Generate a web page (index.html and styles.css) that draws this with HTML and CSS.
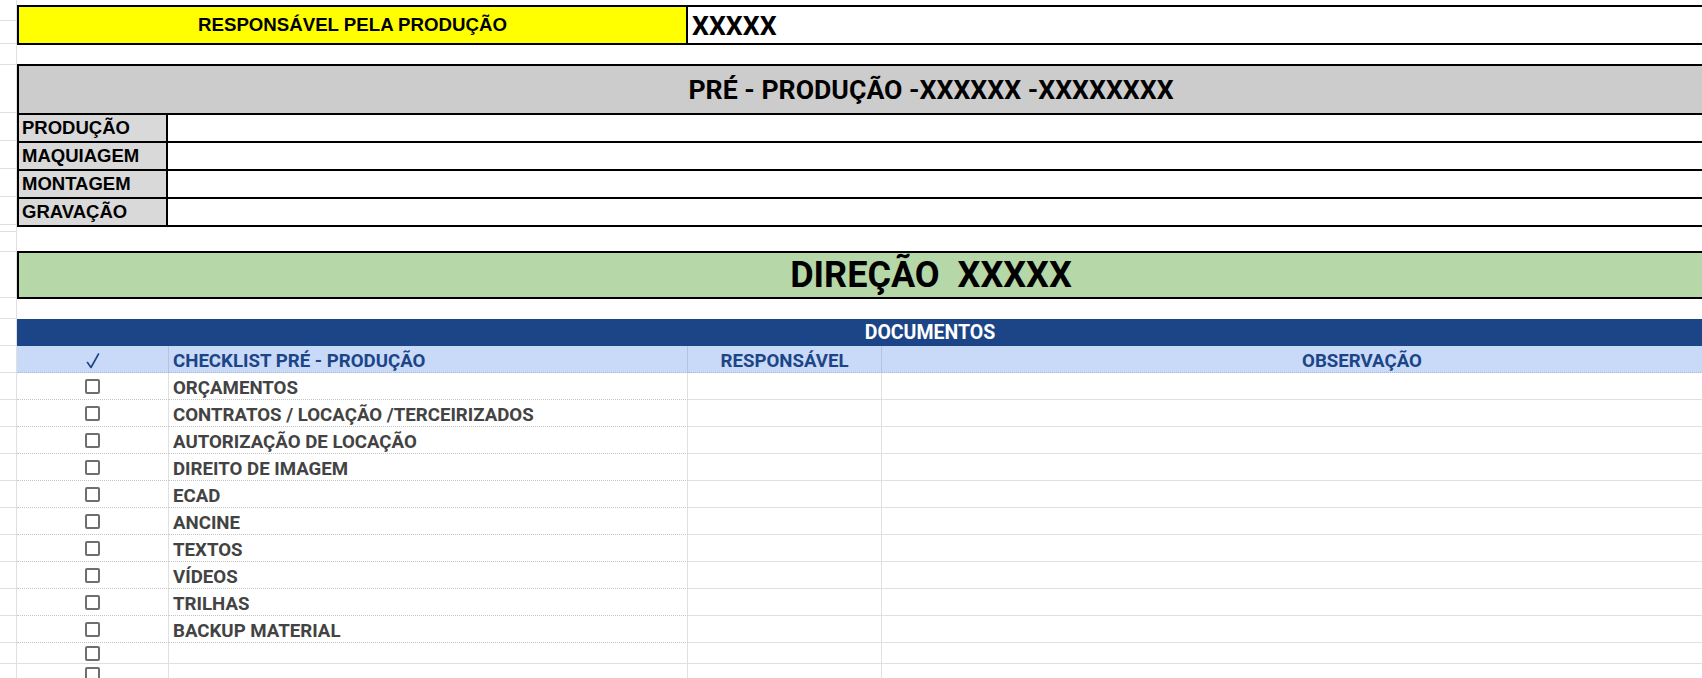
FILE: index.html
```html
<!DOCTYPE html>
<html lang="pt-BR">
<head>
<meta charset="utf-8">
<title>Checklist Pré-Produção</title>
<link rel="stylesheet" href="styles.css">
</head>
<body>
<div class="sheet">
  <div class="gutter">
    <div class="g21"></div><div class="g23"></div><div class="g21"></div><div class="g48"></div>
    <div class="g28"></div><div class="g28"></div><div class="g28"></div><div class="g28"></div>
    <div class="g7"></div><div class="g20"></div><div class="g46"></div><div class="g21"></div>
    <div class="g27"></div><div class="g27"></div>
    <div class="g27"></div><div class="g27"></div><div class="g27"></div><div class="g27"></div><div class="g27"></div>
    <div class="g27"></div><div class="g27"></div><div class="g27"></div><div class="g27"></div><div class="g27"></div>
    <div class="g21"></div><div class="g21"></div>
  </div>
  <div class="main">
    <div class="resp">
      <div class="resp-label">RESPONSÁVEL PELA PRODUÇÃO</div>
      <div class="resp-value">XXXXX</div>
    </div>

    <div class="pre">
      <div class="pre-title">PRÉ - PRODUÇÃO -XXXXXX -XXXXXXXX</div>
      <div class="pre-row"><div class="pre-label">PRODUÇÃO</div><div class="pre-value"></div></div>
      <div class="pre-row"><div class="pre-label">MAQUIAGEM</div><div class="pre-value"></div></div>
      <div class="pre-row"><div class="pre-label">MONTAGEM</div><div class="pre-value"></div></div>
      <div class="pre-row"><div class="pre-label">GRAVAÇÃO</div><div class="pre-value"></div></div>
    </div>

    <div class="direcao">DIREÇÃO  XXXXX</div>

    <div class="docs">
      <div class="docs-title">DOCUMENTOS</div>
      <div class="trow thead">
        <div class="c-check"><svg class="tick" width="14" height="16" viewBox="0 0 14 16"><polyline points="1.5,9.5 5,14.5 12.5,1" fill="none" stroke="#1c4587" stroke-width="1.6" stroke-linecap="round" stroke-linejoin="round"/></svg></div>
        <div class="c-item">CHECKLIST PRÉ - PRODUÇÃO</div>
        <div class="c-resp">RESPONSÁVEL</div>
        <div class="c-obs">OBSERVAÇÃO</div>
      </div>
      <div class="trow"><div class="c-check"><span class="box"></span></div><div class="c-item">ORÇAMENTOS</div><div class="c-resp"></div><div class="c-obs"></div></div>
      <div class="trow"><div class="c-check"><span class="box"></span></div><div class="c-item">CONTRATOS / LOCAÇÃO /TERCEIRIZADOS</div><div class="c-resp"></div><div class="c-obs"></div></div>
      <div class="trow"><div class="c-check"><span class="box"></span></div><div class="c-item">AUTORIZAÇÃO DE LOCAÇÃO</div><div class="c-resp"></div><div class="c-obs"></div></div>
      <div class="trow"><div class="c-check"><span class="box"></span></div><div class="c-item">DIREITO DE IMAGEM</div><div class="c-resp"></div><div class="c-obs"></div></div>
      <div class="trow"><div class="c-check"><span class="box"></span></div><div class="c-item">ECAD</div><div class="c-resp"></div><div class="c-obs"></div></div>
      <div class="trow"><div class="c-check"><span class="box"></span></div><div class="c-item">ANCINE</div><div class="c-resp"></div><div class="c-obs"></div></div>
      <div class="trow"><div class="c-check"><span class="box"></span></div><div class="c-item">TEXTOS</div><div class="c-resp"></div><div class="c-obs"></div></div>
      <div class="trow"><div class="c-check"><span class="box"></span></div><div class="c-item">VÍDEOS</div><div class="c-resp"></div><div class="c-obs"></div></div>
      <div class="trow"><div class="c-check"><span class="box"></span></div><div class="c-item">TRILHAS</div><div class="c-resp"></div><div class="c-obs"></div></div>
      <div class="trow"><div class="c-check"><span class="box"></span></div><div class="c-item">BACKUP MATERIAL</div><div class="c-resp"></div><div class="c-obs"></div></div>
      <div class="trow short solid"><div class="c-check"><span class="box"></span></div><div class="c-item"></div><div class="c-resp"></div><div class="c-obs"></div></div>
      <div class="trow short solid"><div class="c-check"><span class="box"></span></div><div class="c-item"></div><div class="c-resp"></div><div class="c-obs"></div></div>
    </div>
  </div>
</div>
</body>
</html>
```

FILE: styles.css
```css
html, body {
  margin: 0;
  padding: 0;
  background: #ffffff;
  overflow: hidden;
}

.sheet {
  display: flex;
  align-items: flex-start;
  width: 1843px;
}

/* spreadsheet gutter with row gridlines */
.gutter {
  width: 17px;
  flex: none;
  box-sizing: border-box;
  border-right: 1px solid #e0e0e0;
}
.gutter div {
  box-sizing: border-box;
  border-bottom: 1px solid #e0e0e0;
}
.g7 { height: 7px; }
.g20 { height: 20px; }
.g21 { height: 21px; }
.g23 { height: 23px; }
.g27 { height: 27px; }
.g28 { height: 28px; }
.g46 { height: 46px; }
.g48 { height: 48px; }

.main {
  width: 1826px;
  flex: none;
  padding-top: 5px;
  display: flex;
  flex-direction: column;
}
.main > * {
  flex: none;
}

/* Responsável row */
.resp {
  display: flex;
  height: 40px;
  box-sizing: border-box;
  border-top: 2px solid #000;
  border-bottom: 2px solid #000;
  border-left: 2px solid #000;
}
.resp-label {
  width: 669px;
  box-sizing: border-box;
  background: #ffff00;
  border-right: 2px solid #000;
  display: flex;
  align-items: center;
  justify-content: center;
  font-family: "Liberation Sans", Arial, sans-serif;
  font-weight: bold;
  font-size: 18.67px;
  color: #000;
}
.resp-value {
  flex: 1;
  padding-left: 4px;
  padding-top: 2px;
  display: flex;
  align-items: center;
  font-family: Roboto, "Liberation Sans", sans-serif;
  font-weight: bold;
  font-size: 26.67px;
  color: #000;
}

/* Pré-produção block */
.pre {
  margin-top: 19px;
  border: 2px solid #000;
  border-right: none;
}
.pre-title {
  height: 49px;
  box-sizing: border-box;
  background: #cccccc;
  border-bottom: 2px solid #000;
  display: flex;
  align-items: center;
  justify-content: center;
  font-family: Roboto, "Liberation Sans", sans-serif;
  font-weight: bold;
  font-size: 26.67px;
  color: #000;
}
.pre-row {
  display: flex;
  height: 28px;
  box-sizing: border-box;
  border-bottom: 2px solid #000;
}
.pre-row:last-child {
  height: 26px;
  border-bottom: none;
}
.pre-label {
  width: 149px;
  box-sizing: border-box;
  background: #d9d9d9;
  border-right: 2px solid #000;
  padding-left: 3px;
  display: flex;
  align-items: center;
  font-family: "Liberation Sans", Arial, sans-serif;
  font-weight: bold;
  font-size: 18.5px;
  color: #000;
}
.pre-value {
  flex: 1;
  background: #fff;
}

/* Direção banner */
.direcao {
  margin-top: 24px;
  height: 48px;
  box-sizing: border-box;
  border: 2px solid #000;
  border-right: none;
  background: #b6d7a8;
  display: flex;
  align-items: center;
  justify-content: center;
  white-space: pre;
  font-family: Roboto, "Liberation Sans", sans-serif;
  font-weight: bold;
  font-size: 36px;
  color: #000;
}

/* Documentos table */
.docs {
  margin-top: 20px;
}
.docs-title {
  height: 27px;
  background: #1c4587;
  color: #ffffff;
  text-align: center;
  line-height: 28px;
  font-family: Roboto, "Liberation Sans", sans-serif;
  font-weight: bold;
  font-size: 19.5px;
}

.trow {
  display: flex;
  height: 27px;
  font-family: Roboto, "Liberation Sans", sans-serif;
  font-weight: bold;
  font-size: 18.67px;
  color: #434343;
}
.trow.short {
  height: 21px;
}
.trow > div {
  box-sizing: border-box;
  border-right: 1px solid #e0e0e0;
  border-bottom: 1px solid #e0e0e0;
  display: flex;
  align-items: flex-end;
  white-space: nowrap;
  overflow: hidden;
}
.trow .c-check,
.trow .c-item {
  border-bottom: 1px dotted #c4c4c4;
}
.trow.solid .c-check,
.trow.solid .c-item {
  border-bottom: 1px solid #e0e0e0;
}
.trow > .c-check {
  width: 152px;
  justify-content: center;
  align-items: center;
}
.c-item {
  width: 519px;
  padding-left: 4px;
}
.c-resp {
  width: 194px;
  justify-content: center;
}
.c-obs {
  flex: 1;
  justify-content: center;
}

.thead {
  background: #c9daf8;
  color: #1c4587;
}
.trow.thead > div {
  border-right-color: #b3c3e2;
  border-bottom: 1px dotted #aab8d4;
}

.tick {
  display: block;
  margin-top: 4px;
}

.box {
  width: 15px;
  height: 15px;
  box-sizing: border-box;
  border: 2px solid #6e6e6e;
  border-radius: 2px;
  background: #fff;
}
```
